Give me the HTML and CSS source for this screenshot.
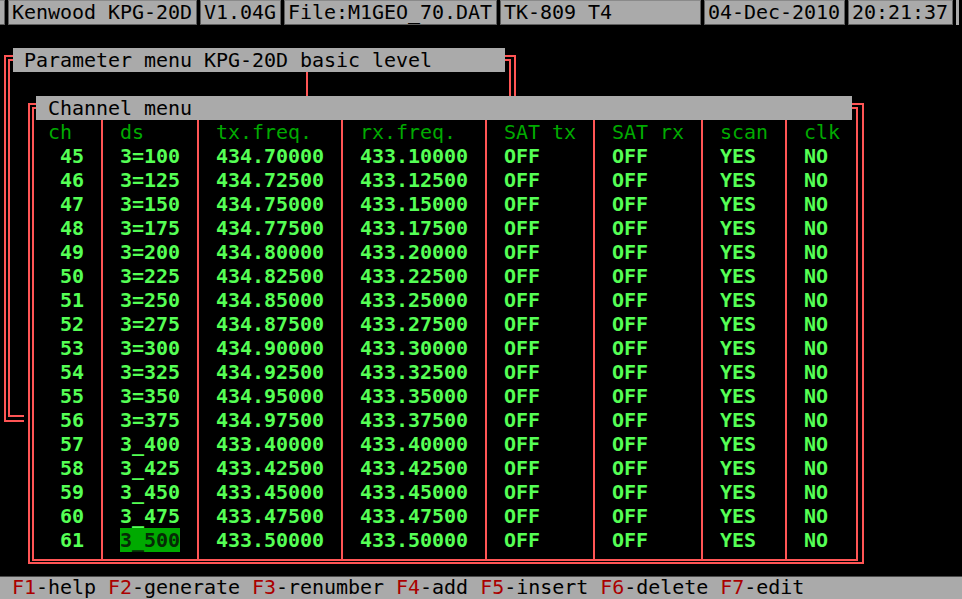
FILE: index.html
```html
<!DOCTYPE html>
<html>
<head>
<meta charset="utf-8">
<title>Kenwood KPG-20D</title>
<link rel="stylesheet" href="styles.css">
</head>
<body>
<div class="screen">
  <header class="topbar">
    <div class="seg seg-edge-l"></div>
    <div class="seg seg-app">Kenwood KPG-20D</div>
    <div class="seg seg-ver">V1.04G</div>
    <div class="seg seg-file">File:M1GEO_70.DAT</div>
    <div class="seg seg-model">TK-809 T4</div>
    <div class="seg seg-date">04-Dec-2010</div>
    <div class="seg seg-time">20:21:37</div>
    <div class="seg seg-edge-r"></div>
  </header>

  <main class="desk">
    <section class="win win-param">
      <div class="win-title">Parameter menu KPG-20D basic level</div>
      <div class="param-sep"></div>
    </section>

    <section class="win win-channel">
      <div class="win-title">Channel menu</div>
      <div class="table">
        <div class="col col-ch">
          <div class="th">ch</div>
          <div class="td">45</div><div class="td">46</div><div class="td">47</div><div class="td">48</div>
          <div class="td">49</div><div class="td">50</div><div class="td">51</div><div class="td">52</div>
          <div class="td">53</div><div class="td">54</div><div class="td">55</div><div class="td">56</div>
          <div class="td">57</div><div class="td">58</div><div class="td">59</div><div class="td">60</div>
          <div class="td">61</div>
        </div>
        <div class="col col-ds">
          <div class="th">ds</div>
          <div class="td">3=100</div><div class="td">3=125</div><div class="td">3=150</div><div class="td">3=175</div>
          <div class="td">3=200</div><div class="td">3=225</div><div class="td">3=250</div><div class="td">3=275</div>
          <div class="td">3=300</div><div class="td">3=325</div><div class="td">3=350</div><div class="td">3=375</div>
          <div class="td">3_400</div><div class="td">3_425</div><div class="td">3_450</div><div class="td">3_475</div>
          <div class="td"><span class="sel">3_500</span></div>
        </div>
        <div class="col col-tx">
          <div class="th">tx.freq.</div>
          <div class="td">434.70000</div><div class="td">434.72500</div><div class="td">434.75000</div><div class="td">434.77500</div>
          <div class="td">434.80000</div><div class="td">434.82500</div><div class="td">434.85000</div><div class="td">434.87500</div>
          <div class="td">434.90000</div><div class="td">434.92500</div><div class="td">434.95000</div><div class="td">434.97500</div>
          <div class="td">433.40000</div><div class="td">433.42500</div><div class="td">433.45000</div><div class="td">433.47500</div>
          <div class="td">433.50000</div>
        </div>
        <div class="col col-rx">
          <div class="th">rx.freq.</div>
          <div class="td">433.10000</div><div class="td">433.12500</div><div class="td">433.15000</div><div class="td">433.17500</div>
          <div class="td">433.20000</div><div class="td">433.22500</div><div class="td">433.25000</div><div class="td">433.27500</div>
          <div class="td">433.30000</div><div class="td">433.32500</div><div class="td">433.35000</div><div class="td">433.37500</div>
          <div class="td">433.40000</div><div class="td">433.42500</div><div class="td">433.45000</div><div class="td">433.47500</div>
          <div class="td">433.50000</div>
        </div>
        <div class="col col-sattx">
          <div class="th">SAT tx</div>
          <div class="td">OFF</div><div class="td">OFF</div><div class="td">OFF</div><div class="td">OFF</div>
          <div class="td">OFF</div><div class="td">OFF</div><div class="td">OFF</div><div class="td">OFF</div>
          <div class="td">OFF</div><div class="td">OFF</div><div class="td">OFF</div><div class="td">OFF</div>
          <div class="td">OFF</div><div class="td">OFF</div><div class="td">OFF</div><div class="td">OFF</div>
          <div class="td">OFF</div>
        </div>
        <div class="col col-satrx">
          <div class="th">SAT rx</div>
          <div class="td">OFF</div><div class="td">OFF</div><div class="td">OFF</div><div class="td">OFF</div>
          <div class="td">OFF</div><div class="td">OFF</div><div class="td">OFF</div><div class="td">OFF</div>
          <div class="td">OFF</div><div class="td">OFF</div><div class="td">OFF</div><div class="td">OFF</div>
          <div class="td">OFF</div><div class="td">OFF</div><div class="td">OFF</div><div class="td">OFF</div>
          <div class="td">OFF</div>
        </div>
        <div class="col col-scan">
          <div class="th">scan</div>
          <div class="td">YES</div><div class="td">YES</div><div class="td">YES</div><div class="td">YES</div>
          <div class="td">YES</div><div class="td">YES</div><div class="td">YES</div><div class="td">YES</div>
          <div class="td">YES</div><div class="td">YES</div><div class="td">YES</div><div class="td">YES</div>
          <div class="td">YES</div><div class="td">YES</div><div class="td">YES</div><div class="td">YES</div>
          <div class="td">YES</div>
        </div>
        <div class="col col-clk">
          <div class="th">clk</div>
          <div class="td">NO</div><div class="td">NO</div><div class="td">NO</div><div class="td">NO</div>
          <div class="td">NO</div><div class="td">NO</div><div class="td">NO</div><div class="td">NO</div>
          <div class="td">NO</div><div class="td">NO</div><div class="td">NO</div><div class="td">NO</div>
          <div class="td">NO</div><div class="td">NO</div><div class="td">NO</div><div class="td">NO</div>
          <div class="td">NO</div>
        </div>
      </div>
    </section>
  </main>

  <footer class="keys"><span class="fk">F1</span>-help <span class="fk">F2</span>-generate <span class="fk">F3</span>-renumber <span class="fk">F4</span>-add <span class="fk">F5</span>-insert <span class="fk">F6</span>-delete <span class="fk">F7</span>-edit</footer>
</div>
</body>
</html>
```

FILE: styles.css
```css
* { box-sizing: border-box; }

html, body {
  margin: 0;
  padding: 0;
  background: #000;
}

body {
  width: 962px;
  height: 599px;
  overflow: hidden;
  font-family: "DejaVu Sans Mono", "Liberation Mono", monospace;
  font-size: 20px;
  line-height: 24px;
  letter-spacing: -0.04px;
}

.screen {
  width: 962px;
  height: 599px;
  display: flex;
  flex-direction: column;
}

/* ---------- top status bar ---------- */
.topbar {
  height: 25px;
  display: flex;
  gap: 3px;
  background: #000;
  flex: none;
}

.seg {
  height: 25px;
  background: #aaaaaa;
  border: 1px solid #5e5e5e;
  border-top-color: #8a8a8a;
  color: #000;
  padding-left: 3px;
  line-height: 23px;
  white-space: pre;
  overflow: hidden;
}

.seg-edge-l { width: 5px; border-left: none; }
.seg-app    { width: 189px; }
.seg-ver    { width: 81px; }
.seg-file   { width: 213px; }
.seg-model  { width: 201px; }
.seg-date   { width: 141px; }
.seg-time   { width: 105px; }
.seg-edge-r { width: 2px; border: none; }

/* ---------- desktop area with windows ---------- */
.desk {
  flex: 1;
  position: relative;
}

.win {
  position: absolute;
  background: #000;
}

.win::before,
.win::after {
  content: "";
  position: absolute;
  border: 2px solid #ff5555;
  pointer-events: none;
}

.win-title {
  position: relative;
  z-index: 2;
  height: 24px;
  background: #aaaaaa;
  color: #000;
  white-space: pre;
}

/* Parameter menu window */
.win-param {
  left: 0;
  top: 23px;
  width: 516px;
  height: 384px;
}
.win-param::before { left: 4px; top: 7px; right: 0; bottom: 10px; }
.win-param::after  { left: 8px; top: 11px; right: 5px; bottom: 15px; }
.win-param .win-title {
  margin-left: 13px;
  width: 492px;
  padding-left: 11px;
}

.param-sep {
  position: absolute;
  left: 306px;
  top: 24px;
  width: 2px;
  height: 26px;
  background: #ff5555;
}

/* Channel menu window */
.win-channel {
  left: 24px;
  top: 71px;
  width: 840px;
  height: 480px;
  z-index: 3;
}
.win-channel::before { left: 4px; top: 7px; right: 0; bottom: 12px; }
.win-channel::after  { left: 8px; top: 11px; right: 6px; bottom: 15px; }
.win-channel .win-title {
  margin-left: 12px;
  width: 816px;
  padding-left: 12px;
}

.table {
  margin-left: 10px;
  width: 822px;
  height: 440px;
  display: flex;
}

.col {
  height: 100%;
  border-right: 2px solid #ff5555;
  padding-left: 17px;
}
.col:last-child { border-right: none; }

.col-ch    { width: 69px; padding-left: 0; padding-right: 17px; text-align: right; }
.col-ds    { width: 96px; }
.col-tx    { width: 144px; }
.col-rx    { width: 144px; }
.col-sattx { width: 108px; }
.col-satrx { width: 108px; }
.col-scan  { width: 84px; }
.col-clk   { width: 69px; }

.th,
.td {
  height: 24px;
  white-space: pre;
}

.th { color: #00aa00; }
.col-ch .th { text-align: left; padding-left: 14px; }

.td {
  color: #55ff55;
  font-weight: bold;
}

.sel {
  display: inline-block;
  height: 24px;
  background: #00aa00;
  color: #062a06;
}

/* ---------- function key bar ---------- */
.keys {
  flex: none;
  height: 23px;
  border-top: 1px solid #4a4a4a;
  background: #aaaaaa;
  color: #000;
  padding-left: 12px;
  line-height: 21px;
  white-space: pre;
  overflow: hidden;
}

.fk { color: #aa0000; }
```
